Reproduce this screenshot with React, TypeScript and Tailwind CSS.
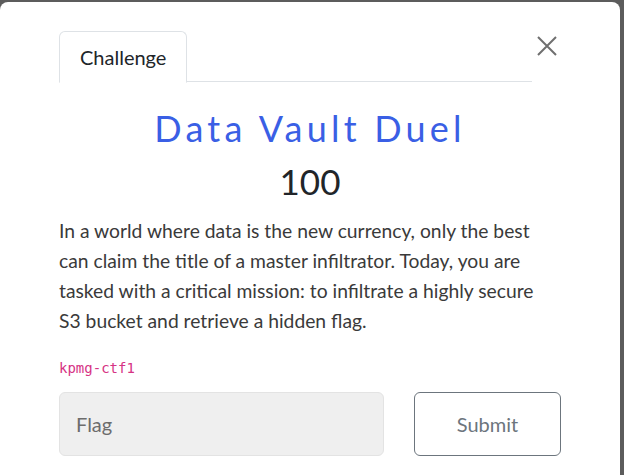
export default function App() {
  return (
    <div className="w-[624px] h-[475px] bg-[#5c5c5c] overflow-hidden" style={{ fontFamily: "Lato, 'Noto Sans', sans-serif" }}>
      <div className="w-[620px] h-[475px] mt-[2px] bg-white rounded-t-[8px] px-[59px] pt-[29px]">
        <div className="flex items-start">
          <div className="flex-1 flex border-b border-[#dee2e6] h-[51px]">
            <div className="h-[52px] px-[20px] flex items-center border border-[#dee2e6] border-b-white rounded-t-[6px] bg-white text-[20px] text-[#212529]">
              Challenge
            </div>
          </div>
          <button className="ml-[5px] mr-[4px] mt-[5px] w-[20px] h-[20px] flex items-center justify-center">
            <svg width="20" height="20" viewBox="0 0 20 20" fill="none" stroke="#6f6f6f" strokeWidth="2">
              <path d="M1 1L19 19M19 1L1 19" />
            </svg>
          </button>
        </div>
        <div className="w-[502px]">
          <h2 className="mt-[22px] text-center text-[36px] leading-[48px] tracking-[4.2px] text-[#3a5fe5]">Data Vault Duel</h2>
          <div className="mt-[7px] text-center text-[35px] leading-[44px] text-[#212529]">100</div>
          <p className="mt-[13px] w-[499px] text-[19.3px] leading-[30px] text-[#3a3a3a]">
            In a world where data is the new currency, only the best can claim the title of a master infiltrator. Today, you are tasked with a critical mission: to infiltrate a highly secure S3 bucket and retrieve a hidden flag.
          </p>
          <div className="mt-[22px] text-[14px] leading-[20px] text-[#d63384]" style={{ fontFamily: "'DejaVu Sans Mono', monospace" }}>kpmg-ctf1</div>
          <div className="mt-[14px] flex items-center">
            <div className="w-[325px] h-[64px] bg-[#efefef] border border-[#e3e3e3] rounded-[6px] flex items-center px-[16px] text-[20px] text-[#6c6c6c]">Flag</div>
            <button className="ml-[30px] w-[147px] h-[64px] border border-[#6c757d] rounded-[6px] text-[20px] text-[#6c757d]">Submit</button>
          </div>
        </div>
      </div>
    </div>
  );
}
